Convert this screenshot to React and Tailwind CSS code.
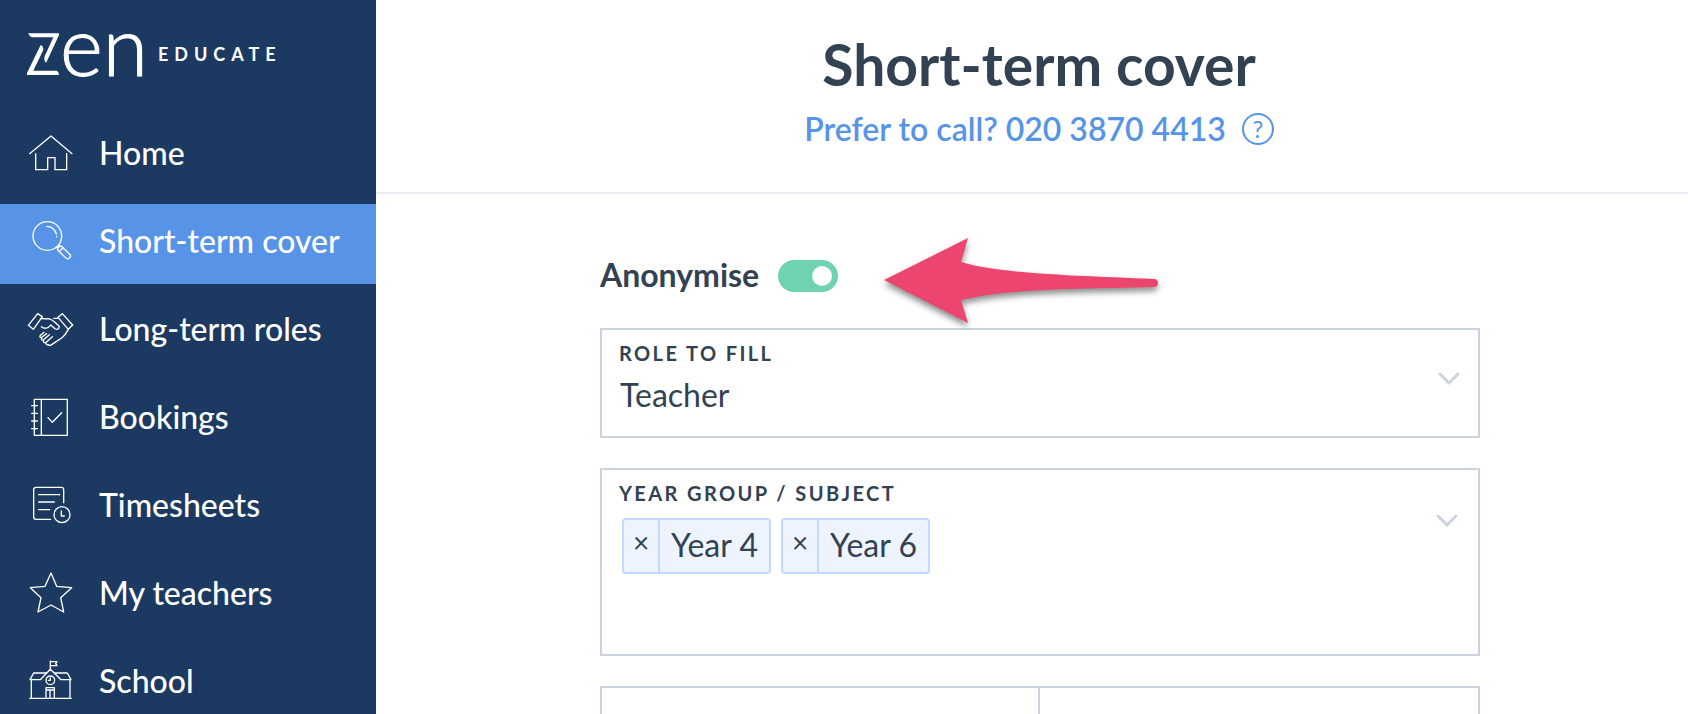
import { useState } from "react";

const stroke = {
  fill: "none",
  stroke: "currentColor",
  strokeWidth: 4,
  strokeLinecap: "round",
  strokeLinejoin: "round",
};

function NavIcon({ children }) {
  return (
    <svg viewBox="0 0 144 144" className="size-12 shrink-0" aria-hidden="true" {...stroke}>
      {children}
    </svg>
  );
}

const HomeIcon = () => (
  <NavIcon>
    <path d="M8 65 72 12l63 53" />
    <path d="M26 65v48h36V77h22v36h35V65" />
  </NavIcon>
);

const SearchIcon = () => (
  <NavIcon>
    <circle cx="61" cy="48" r="43" />
    <path d="M59 19a30 30 0 0 1 29 23M89 49v1" />
    <g transform="translate(91 78) rotate(44)">
      <path d="M0-4h5v8H0" />
      <rect x="5" y="-8" width="46" height="16" rx="7" />
      <path d="M16-8V8" />
    </g>
  </NavIcon>
);

const HandshakeIcon = () => (
  <NavIcon>
    <path d="M32 17 46 26 19 64 4 52Z" />
    <path d="m106 17 31 34-13 13-31-36Z" />
    <path d="M44 32c10 0 14 1 20 0 13 1 22 14 32 22 3 7-4 12-11 9L71 51c-8 12-20 12-28 5M93 31H80" />
    <path d="M124 64c-6 12-10 18-20 26L74 110q-6 4-11 1" />
    <path d="M51 73 39 83q-2 7 6 4L59 77M45 88q-5 10 4 8L67 80M50 97q-3 8 6 7L76 86M57 105q0 6 7 5" />
  </NavIcon>
);

const BookingsIcon = () => (
  <NavIcon>
    <path d="M22 10h99v108H22zM43 10v108M14 29h17M14 52h17M14 75h17M14 98h17" />
    <path d="m63 65 13 14 28-29" />
  </NavIcon>
);

const TimesheetsIcon = () => (
  <NavIcon>
    <path d="M71 106H27a7 7 0 0 1-7-7V17a7 7 0 0 1 7-7h76a7 7 0 0 1 7 7v39M35 32h63M35 54h47M35 77h33" />
    <circle cx="105" cy="92" r="24" />
    <path d="M103 81v15h9" />
  </NavIcon>
);

const StarIcon = () => (
  <NavIcon>
    <path d="m72 3 17 40 45 4-33 30 9 43-38-21-39 21 9-43L10 47l44-4Z" />
  </NavIcon>
);

const SchoolIcon = () => (
  <NavIcon>
    <path d="M8 115h125M13 59v56M129 59v56M70 28V3M70 5h20l-4 6 4 6H70" />
    <path d="M70 28 40 59H9l11-20h38M70 28l32 31h30l-11-20H83" />
    <circle cx="70" cy="61" r="13" />
    <path d="M70 54v7h-6M57 115V83h25v32M57 90h25M69 90v25" />
  </NavIcon>
);

const navItems = [
  { label: "Home", Icon: HomeIcon },
  { label: "Short-term cover", Icon: SearchIcon, active: true },
  { label: "Long-term roles", Icon: HandshakeIcon },
  { label: "Bookings", Icon: BookingsIcon },
  { label: "Timesheets", Icon: TimesheetsIcon },
  { label: "My teachers", Icon: StarIcon },
  { label: "School", Icon: SchoolIcon },
];

function Logo() {
  return (
    <a href="#home" className="flex h-[108px] items-center pl-[27px]">
      <svg viewBox="0 0 96 126" className="h-[42px] w-8 shrink-0" fill="currentColor" role="img" aria-label="z">
        <path d="M4 1h92v5L59 86q-3 4-5 0-4-8-1-16L79 13H16Q8 12 4 1Z" />
        <path d="M41 36q7 2 8 10 0 5-2 9L19 113h70q7 3 7 13H0v-6Z" />
      </svg>
      <span className="pb-5 pl-px text-[82px] leading-none font-light [-webkit-text-stroke:1px_currentColor]">en</span>
      <span className="pl-[10px] text-lg font-bold tracking-[6px]">EDUCATE</span>
    </a>
  );
}

function Sidebar() {
  return (
    <aside className="w-[376px] shrink-0 bg-[#1c3a61] text-white">
      <Logo />
      <nav className="flex flex-col gap-2 pt-2">
        {navItems.map(({ label, Icon, active }) => (
          <a
            key={label}
            href={"#" + label.toLowerCase().replace(/ /g, "-")}
            aria-current={active ? "page" : undefined}
            className={
              active
                ? "flex h-20 items-center gap-6 bg-[#5793e7] pl-[27px]"
                : "flex h-20 items-center gap-6 pl-[27px]"
            }
          >
            <Icon />
            <span className="pb-[6px] text-[32px] leading-10 font-medium">{label}</span>
          </a>
        ))}
      </nav>
    </aside>
  );
}

function Chevron() {
  return (
    <svg viewBox="0 0 24 16" className="h-4 w-6" aria-hidden="true" fill="none" stroke="#cbd3e0" strokeWidth="3" strokeLinecap="round">
      <path d="m3 3 9 9 9-9" />
    </svg>
  );
}

function Header() {
  return (
    <header className="flex h-[194px] flex-col items-center border-b-2 border-[#e8ebf1] pt-8 pl-[14px]">
      <h1 className="text-[57px] leading-[64px] font-bold">Short-term cover</h1>
      <div className="flex items-center gap-4 pt-3 text-[#5793e7]">
        <a href="tel:02038704413" className="pt-px text-[32px] leading-10 font-semibold">
          Prefer to call? 020 3870 4413
        </a>
        <button
          type="button"
          aria-label="Help"
          className="flex size-8 items-center justify-center rounded-full border-2 border-current text-[24px] leading-none"
        >
          ?
        </button>
      </div>
    </header>
  );
}

function Arrow() {
  return (
    <svg viewBox="0 0 280 90" className="h-[90px] w-[280px] overflow-visible drop-shadow-[0_4px_3px_rgba(0,0,0,0.45)]" aria-hidden="true">
      <path
        fill="#ec466e"
        d="M0 43 84 1l-7 24c40 12 120 14 193 17a4 4 0 0 1 0 8C200 52 125 51 77 63l7 23Z"
      />
    </svg>
  );
}

const labelClass = "text-[20px] leading-6 font-bold tracking-[0.12em]";

function RoleField() {
  return (
    <div className="relative border-2 border-[#cbd3e0]">
      <label htmlFor="role" className={"block px-[17px] pt-[11px] " + labelClass}>
        ROLE TO FILL
      </label>
      <select
        id="role"
        defaultValue="Teacher"
        className="block h-[71px] w-full appearance-none bg-transparent px-[18px] pt-2 pb-5 text-[32px] leading-10"
      >
        <option>Teacher</option>
        <option>Teaching assistant</option>
      </select>
      <div className="pointer-events-none absolute top-[41px] right-[17px]">
        <Chevron />
      </div>
    </div>
  );
}

function YearField() {
  const [years, setYears] = useState(["Year 4", "Year 6"]);
  return (
    <div className="relative border-2 border-[#cbd3e0]">
      <label htmlFor="years" className={"block px-[17px] pt-[11px] " + labelClass}>
        YEAR GROUP / SUBJECT
      </label>
      <div className="flex min-h-[149px] items-start gap-[10px] px-5 pt-[13px]">
        {years.map((year) => (
          <span key={year} className="flex h-14 items-stretch rounded-[4px] border-2 border-[#c0d9fc] bg-[#eef4fe]">
            <button
              type="button"
              aria-label={"Remove " + year}
              onClick={() => setYears(years.filter((y) => y !== year))}
              className="w-9 border-r-2 border-[#c0d9fc] pb-2 text-[28px] leading-none"
            >
              ×
            </button>
            <span className="px-[11px] text-[32px] leading-[50px]">{year}</span>
          </span>
        ))}
        <input id="years" type="text" className="h-14 min-w-0 flex-1 bg-transparent text-[32px] outline-none" />
      </div>
      <div className="pointer-events-none absolute top-[43px] right-[19px]">
        <Chevron />
      </div>
    </div>
  );
}

export default function App() {
  return (
    <div className="flex h-screen overflow-hidden bg-white font-[Lato,'Open_Sans',sans-serif] text-[#324252]">
      <Sidebar />
      <main className="min-w-0 flex-1">
        <Header />
        <form className="pl-4">
          <div className="mx-auto flex max-w-[880px] flex-col gap-[30px] pt-[60px]">
            <div className="flex h-11 items-center">
              <label htmlFor="anonymise" className="pr-[19px] pb-[2px] text-[32px] leading-10 font-bold">
                Anonymise
              </label>
              <input
                id="anonymise"
                type="checkbox"
                role="switch"
                defaultChecked
                className="flex h-8 w-[60px] shrink-0 appearance-none items-center rounded-full bg-[#cbd3e0] px-[6px] before:size-5 before:rounded-full before:bg-white checked:justify-end checked:bg-[#6fd3b0]"
              />
              <div className="relative z-10 pt-3 pl-[46px]">
                <Arrow />
              </div>
            </div>
            <RoleField />
            <YearField />
            <div className="grid h-[120px] grid-cols-2 divide-x-2 divide-[#cbd3e0] border-2 border-[#cbd3e0]">
              <div />
              <div />
            </div>
          </div>
        </form>
      </main>
    </div>
  );
}
